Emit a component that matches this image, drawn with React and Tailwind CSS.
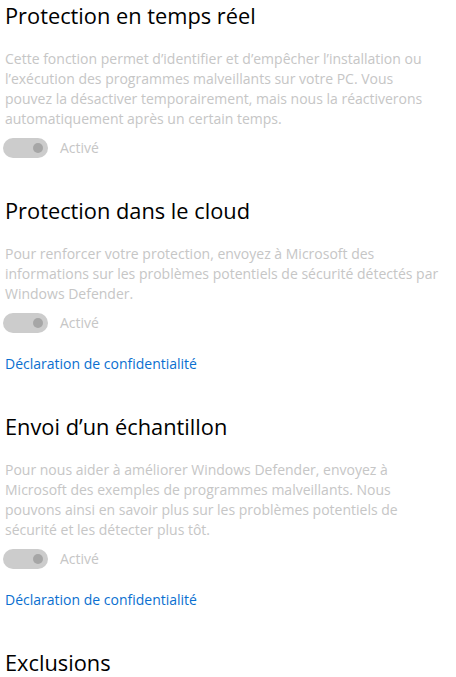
import React from 'react'

const SECTIONS = [
  {
    title: 'Protection en temps réel',
    lines: [
      'Cette fonction permet d’identifier et d’empêcher l’installation ou',
      'l’exécution des programmes malveillants sur votre PC. Vous',
      'pouvez la désactiver temporairement, mais nous la réactiverons',
      'automatiquement après un certain temps.',
    ],
    link: false,
  },
  {
    title: 'Protection dans le cloud',
    lines: [
      'Pour renforcer votre protection, envoyez à Microsoft des',
      'informations sur les problèmes potentiels de sécurité détectés par',
      'Windows Defender.',
    ],
    link: true,
  },
  {
    title: 'Envoi d’un échantillon',
    lines: [
      'Pour nous aider à améliorer Windows Defender, envoyez à',
      'Microsoft des exemples de programmes malveillants. Nous',
      'pouvons ainsi en savoir plus sur les problèmes potentiels de',
      'sécurité et les détecter plus tôt.',
    ],
    link: true,
  },
]

function Toggle() {
  return (
    <div className="flex items-center gap-3">
      <div className="w-[45px] h-5 rounded-full bg-[#cccccc] flex items-center justify-end pr-[5px]">
        <div className="w-[10px] h-[10px] rounded-full bg-[#a6a6a6]" />
      </div>
      <span className="text-[14px] leading-[20px] text-[#c6c6c6]">Activé</span>
    </div>
  )
}

function Section({ title, lines, link, first }) {
  return (
    <div className={first ? '' : 'mt-[37px]'}>
      <h2 className="text-[21.8px] leading-[32px] text-black">{title}</h2>
      <p className="mt-[17px] text-[14px] leading-[20px] text-[#c6c6c6] whitespace-nowrap">
        {lines.map((l, i) => (
          <span key={i} className="block">{l}</span>
        ))}
      </p>
      <div className="mt-[9px] -ml-[2px]">
        <Toggle />
      </div>
      {link && (
        <div className="mt-[21px] text-[14px] leading-[20px] text-[#0a6fd0]">
          Déclaration de confidentialité
        </div>
      )}
    </div>
  )
}

export default function App() {
  return (
    <div
      className="w-[456px] h-[677px] overflow-hidden bg-white pl-[5px]"
      style={{ fontFamily: '"Open Sans", "Noto Sans", sans-serif' }}
    >
      {SECTIONS.map((s, i) => (
        <Section key={s.title} {...s} first={i === 0} />
      ))}
      <h2 className="mt-[37px] text-[21.8px] leading-[32px] text-black">Exclusions</h2>
    </div>
  )
}
